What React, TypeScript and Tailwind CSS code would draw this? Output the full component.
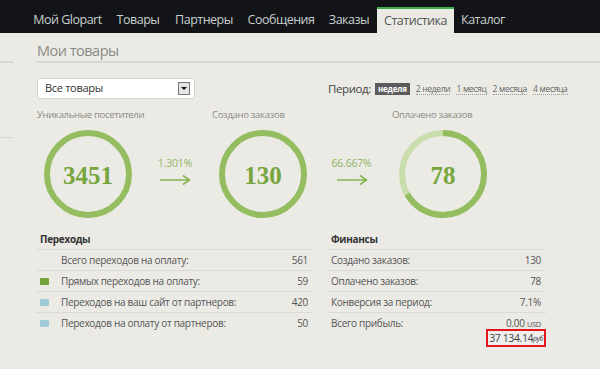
import React from "react";

const tabs = [
  { label: "Мой Glopart", w: "w-[83px]" },
  { label: "Товары", w: "w-[58px]" },
  { label: "Партнеры", w: "w-[74px]" },
  { label: "Сообщения", w: "w-[80px]" },
  { label: "Заказы", w: "w-[56px]" },
  { label: "Статистика", w: "w-[77px]", active: true },
  { label: "Каталог", w: "w-[58px]" },
];

function Ring({ value, partial }: { value: string; partial?: boolean }) {
  const r = 41;
  const c = 2 * Math.PI * r;
  return (
    <div className="relative w-[88px] h-[88px] flex items-center justify-center">
      <svg className="absolute inset-0" width="88" height="88" viewBox="0 0 88 88">
        <circle cx="44" cy="44" r={r} fill="none" stroke={partial ? "#c9dcab" : "#93bd5e"} strokeWidth="6" />
        {partial && (
          <circle
            cx="44"
            cy="44"
            r={r}
            fill="none"
            stroke="#93bd5e"
            strokeWidth="6"
            strokeDasharray={`${c * 0.667} ${c}`}
            transform="rotate(-90 44 44)"
          />
        )}
      </svg>
      <span className="relative font-['Liberation_Serif',serif] font-bold text-[25px] leading-none text-[#76a53c] pt-[3px]">
        {value}
      </span>
    </div>
  );
}

function Arrow({ pct, w }: { pct: string; w: string }) {
  return (
    <div className={`${w} flex flex-col items-center pt-[47px]`}>
      <span className="text-[10.5px] leading-[14px] tracking-[-0.2px] text-[#8db763]">{pct}</span>
      <svg className="mt-[4px]" width="32" height="12" viewBox="0 0 32 12">
        <path d="M1 6 H30 M24 1.5 L30.5 6 L24 10.5" fill="none" stroke="#86b455" strokeWidth="1.6" />
      </svg>
    </div>
  );
}

function Col({ label, value, partial, w }: { label: string; value: string; partial?: boolean; w: string }) {
  return (
    <div className={`${w} flex flex-col`}>
      <span className="h-[12px] text-[9.5px] leading-[12px] tracking-[-0.3px] whitespace-nowrap text-[#8a8a86]">{label}</span>
      <div className="mt-[9px] ml-[7px]">
        <Ring value={value} partial={partial} />
      </div>
    </div>
  );
}

const leftRows = [
  { label: "Всего переходов на оплату:", value: "561", color: "" },
  { label: "Прямых переходов на оплату:", value: "59", color: "bg-[#74a33c]" },
  { label: "Переходов на ваш сайт от партнеров:", value: "420", color: "bg-[#9fcbd7]" },
  { label: "Переходов на оплату от партнеров:", value: "50", color: "bg-[#9fcbd7]" },
];

export default function App() {
  return (
    <div className="w-[600px] h-[369px] overflow-hidden bg-[#ebeae5] font-['Open_Sans',sans-serif] text-[#555]">
      <nav className="h-[33px] bg-[#131418] flex items-end pl-[26px]">
        {tabs.map((t) =>
          t.active ? (
            <div
              key={t.label}
              className={`${t.w} h-[26px] bg-[#ebeae5] border-t-2 border-[#3aae4a] flex items-center justify-center text-[12.5px] text-[#555] tracking-[-0.5px]`}
            >
              {t.label}
            </div>
          ) : (
            <div
              key={t.label}
              className={`${t.w} h-[26px] flex items-center justify-center text-[12.5px] text-[#c7d0cc] tracking-[-0.5px]`}
            >
              {t.label}
            </div>
          )
        )}
      </nav>
      <div className="flex">
        <div className="w-[14px] shrink-0">
          <div className="mt-[28px] h-[2px] bg-[#d9d7d2]" />
          <div className="mt-[74px] h-[1px] bg-[#d9d7d2]" />
        </div>
        <div className="ml-[22px] flex-1">
          <div className="h-[30px] border-b-2 border-[#d9d7d2] text-[14.5px] leading-[20px] pt-[8px] tracking-[-0.5px] text-[#8a8a86] pl-[1px]">
            Мои товары
          </div>
          <div className="flex items-center mt-[15px] ml-[1px]">
            <div className="w-[158px] h-[21px] bg-white border border-[#d3d2cd] rounded-[3px] flex items-center pl-[7px] pr-[4px]">
              <span className="text-[11px] tracking-[-0.3px] text-[#333] flex-1">Все товары</span>
              <div className="w-[12px] h-[13px] border border-[#777] bg-[#e4e4e4] flex items-center justify-center">
                <div className="w-0 h-0 border-l-[3px] border-r-[3px] border-t-[3px] border-l-transparent border-r-transparent border-t-[#111]" />
              </div>
            </div>
            <div className="ml-[133px] flex items-center gap-[6px] whitespace-nowrap">
              <span className="text-[11.5px] tracking-[-0.4px] text-[#444] mr-[-2px]">Период:</span>
              <span className="bg-[#5b5b5b] text-white text-[8px] font-bold px-[3px] leading-[12px] tracking-[-0.2px]">неделя</span>
              {["2 недели", "1 месяц", "2 месяца", "4 месяца"].map((p) => (
                <span key={p} className="text-[8.5px] tracking-[-0.3px] text-[#666] leading-[11px] border-b border-dotted border-[#999]">
                  {p}
                </span>
              ))}
            </div>
          </div>
          <div className="flex mt-[10px] ml-[1px]">
            <Col w="w-[95px]" label="Уникальные посетители" value="3451" />
            <Arrow w="w-[80px] pl-[6px]" pct="1.301%" />
            <Col w="w-[94px]" label="Создано заказов" value="130" />
            <Arrow w="w-[86px] pl-[5px]" pct="66.667%" />
            <Col w="w-[95px]" label="Оплачено заказов" value="78" partial />
          </div>
          <div className="flex mt-[11px] text-[10px] tracking-[-0.3px]">
            <div className="w-[277px]">
              <div className="h-[21px] border-b border-[#dddbd6] flex items-center pl-[4px] font-bold text-[#333]">
                Переходы
              </div>
              {leftRows.map((r, i) => (
                <div
                  key={r.label}
                  className={`h-[21px] flex items-center pl-[4px] pr-[5px] text-[#555] ${i < 3 ? "border-b border-[#dddbd6]" : ""}`}
                >
                  <div className="w-[21px] shrink-0">
                    {r.color && <div className={`w-[9px] h-[7px] rounded-[1px] ${r.color}`} />}
                  </div>
                  <span className="flex-1">{r.label}</span>
                  <span>{r.value}</span>
                </div>
              ))}
            </div>
            <div className="w-[218px] ml-[15px]">
              <div className="h-[21px] border-b border-[#dddbd6] flex items-center pl-[3px] font-bold text-[#333]">
                Финансы
              </div>
              {[
                ["Создано заказов:", "130"],
                ["Оплачено заказов:", "78"],
                ["Конверсия за период:", "7.1%"],
              ].map(([l, v]) => (
                <div key={l} className="h-[21px] flex items-center pl-[3px] pr-[5px] border-b border-[#dddbd6] text-[#555]">
                  <span className="flex-1">{l}</span>
                  <span>{v}</span>
                </div>
              ))}
              <div className="h-[21px] flex items-center pl-[3px] pr-[5px] text-[#555]">
                <span className="flex-1">Всего прибыль:</span>
                <span>
                  0.00 <span className="text-[7.5px]">USD</span>
                </span>
              </div>
              <div className="flex justify-end -mt-[5px]">
                <div className="border-2 border-[#e3161c] bg-[#efefef] h-[18px] px-[1px] flex items-center text-[10.5px] tracking-[-0.4px] text-[#444] leading-none">
                  37 134.14<span className="text-[7px] italic">руб</span>
                </div>
              </div>
            </div>
          </div>
        </div>
      </div>
    </div>
  );
}
